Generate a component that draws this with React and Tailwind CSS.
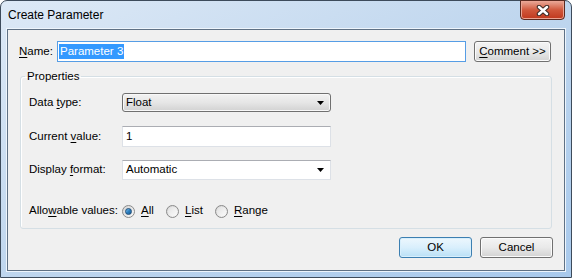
import React from 'react';

const font = "font-['Liberation_Sans',Arial,sans-serif]";

function U({ children }) {
  return <span className="underline underline-offset-2">{children}</span>;
}

function Arrow() {
  return (
    <svg width="7" height="4" viewBox="0 0 7 4" className="shrink-0">
      <path d="M0 0h7L3.5 4z" fill="#000" />
    </svg>
  );
}

function Radio({ checked }) {
  return (
    <span className="flex h-[13px] w-[13px] shrink-0 items-center justify-center rounded-full border border-[#8a8a8a] bg-gradient-to-br from-[#d4d4d4] to-[#fafafa]">
      {checked ? (
        <span className="h-[7px] w-[7px] rounded-full border border-[#1f4d78] bg-gradient-to-br from-[#7cc3f0] via-[#2b7fc0] to-[#1b5d93]" />
      ) : (
        <span className="h-[9px] w-[9px] rounded-full bg-gradient-to-br from-[#e2e2e2] to-[#fbfbfb]" />
      )}
    </span>
  );
}

function WinButton({ children, primary, className = '' }) {
  return (
    <button
      type="button"
      className={`flex h-[21px] items-center justify-center rounded-[3px] border text-[11.5px] text-black ${
        primary
          ? 'border-[#3c7fb1] bg-gradient-to-b from-[#edf7fd] via-[#d9effc] to-[#b9e0f6] shadow-[inset_0_0_0_1px_#d8effc]'
          : 'border-[#707070] bg-gradient-to-b from-[#f4f4f4] via-[#e9e9e9] to-[#d3d3d3] shadow-[inset_0_0_0_1px_#fbfbfb]'
      } ${className}`}
    >
      {children}
    </button>
  );
}

function Row({ label, children, className = '' }) {
  return (
    <div className={`flex items-center ${className}`}>
      <span className="w-[93px] shrink-0">{label}</span>
      {children}
    </div>
  );
}

export default function App() {
  return (
    <div className={`${font} h-[278px] w-[572px] overflow-hidden`}>
      <div className="flex h-full w-full flex-col rounded-t-[7px] border border-[#3d4b5b] bg-gradient-to-br from-[#dde9f6] via-[#bfd6ee] to-[#a8c9ec]">
        <div className="flex h-[28px] shrink-0 items-start justify-between">
          <span className="pl-[7px] pt-[6px] text-[12px] leading-[16px] text-black">Create Parameter</span>
          <div className="mr-[6px] mt-[-1px] flex h-[20px] w-[45px] items-center justify-center rounded-b-[4px] border border-[#5b2a20] bg-gradient-to-b from-[#e9a999] via-[#d0573b] to-[#c0371c] shadow-[inset_0_0_0_1px_#eba493]">
            <svg width="14" height="11" viewBox="0 0 14 11">
              <path d="M3 2l8 7M11 2l-8 7" stroke="#3b2a26" strokeWidth="4.5" strokeLinecap="round" />
              <path d="M3 2l8 7M11 2l-8 7" stroke="#fff" strokeWidth="2.5" strokeLinecap="round" />
            </svg>
          </div>
        </div>
        <div className="mx-[6px] mb-[6px] flex flex-1 flex-col border border-[#5f7185] bg-[#f0f0f0] text-[11.5px] text-black shadow-[0_0_0_1px_#eef5fc]">
          <div className="mt-[11px] flex h-[21px] items-center pl-[11px]">
            <span className="w-[38px] shrink-0">
              <U>N</U>ame:
            </span>
            <div className="flex h-[21px] w-[409px] items-center border border-[#569de5] bg-white pl-[1px]">
              <span className="bg-[#3399ff] px-[1px] leading-[15px] text-white">Parameter 3</span>
            </div>
            <WinButton className="ml-[8px] w-[77px]">
              <span>
                <U>C</U>omment &gt;&gt;
              </span>
            </WinButton>
          </div>

          <fieldset className="ml-[12px] mt-[7px] w-[532px] rounded-[3px] border border-[#d5dfe5] pb-[10px] pl-[8px] pt-[10px] shadow-[inset_1px_1px_0_#fff]">
            <legend className="ml-[-4px] px-[2px] leading-[14px]">Properties</legend>
            <Row label={<>Data <U>t</U>ype:</>}>
              <div className="flex h-[19px] w-[209px] items-center justify-between rounded-[3px] border border-[#707070] bg-gradient-to-b from-[#f2f2f2] via-[#e6e6e6] to-[#d2d2d2] pl-[3px] pr-[6px] shadow-[inset_0_0_0_1px_#f8f8f8]">
                <span>Float</span>
                <Arrow />
              </div>
            </Row>
            <Row label={<>Current <U>v</U>alue:</>} className="mt-[14px]">
              <div className="flex h-[21px] w-[209px] items-center border border-[#dde1e7] border-t-[#abadb3] bg-white pl-[3px]">
                1
              </div>
            </Row>
            <Row label={<>Display <U>f</U>ormat:</>} className="mt-[13px]">
              <div className="flex h-[20px] w-[209px] items-center justify-between border border-[#dde1e7] border-t-[#abadb3] bg-white pl-[3px] pr-[6px]">
                <span>Automatic</span>
                <Arrow />
              </div>
            </Row>
            <Row label={<>Allo<U>w</U>able values:</>} className="mt-[24px] h-[14px]">
              <div className="flex w-[44px] items-center gap-[6px]">
                <Radio checked />
                <span>
                  <U>A</U>ll
                </span>
              </div>
              <div className="flex w-[49px] items-center gap-[6px]">
                <Radio />
                <span>
                  <U>L</U>ist
                </span>
              </div>
              <div className="flex items-center gap-[6px]">
                <Radio />
                <span>
                  <U>R</U>ange
                </span>
              </div>
            </Row>
          </fieldset>

          <div className="mt-[8px] flex justify-end gap-[8px] pr-[11px]">
            <WinButton primary className="w-[73px]">
              OK
            </WinButton>
            <WinButton className="w-[73px]">Cancel</WinButton>
          </div>
        </div>
      </div>
    </div>
  );
}
